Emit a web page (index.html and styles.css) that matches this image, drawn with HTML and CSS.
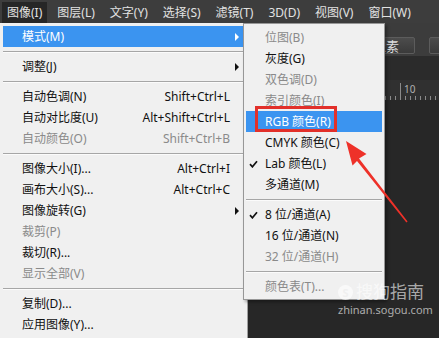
FILE: index.html
```html
<!DOCTYPE html>
<html lang="zh-CN">

<head>
    <meta charset="UTF-8">
    <meta name="viewport" content="width=device-width, initial-scale=1.0">
    <title>图像 - 模式</title>
    <link rel="stylesheet" href="styles.css">
</head>

<body>
    <div class="app">
        <nav class="menubar">
            <span class="menubar-item active">图像(I)</span>
            <span class="menubar-item">图层(L)</span>
            <span class="menubar-item">文字(Y)</span>
            <span class="menubar-item">选择(S)</span>
            <span class="menubar-item">滤镜(T)</span>
            <span class="menubar-item">3D(D)</span>
            <span class="menubar-item">视图(V)</span>
            <span class="menubar-item">窗口(W)</span>
        </nav>

        <div class="workspace">
            <div class="menu main-menu">
                <div class="item selected"><span class="label">模式(M)</span><span class="key"></span><span class="more"></span></div>
                <div class="sep"></div>
                <div class="item"><span class="label">调整(J)</span><span class="key"></span><span class="more"></span></div>
                <div class="sep"></div>
                <div class="item"><span class="label">自动色调(N)</span><span class="key">Shift+Ctrl+L</span><span></span></div>
                <div class="item"><span class="label">自动对比度(U)</span><span class="key">Alt+Shift+Ctrl+L</span><span></span></div>
                <div class="item disabled"><span class="label">自动颜色(O)</span><span class="key">Shift+Ctrl+B</span><span></span></div>
                <div class="sep"></div>
                <div class="item"><span class="label">图像大小(I)...</span><span class="key">Alt+Ctrl+I</span><span></span></div>
                <div class="item"><span class="label">画布大小(S)...</span><span class="key">Alt+Ctrl+C</span><span></span></div>
                <div class="item"><span class="label">图像旋转(G)</span><span class="key"></span><span class="more"></span></div>
                <div class="item disabled"><span class="label">裁剪(P)</span><span class="key"></span><span></span></div>
                <div class="item"><span class="label">裁切(R)...</span><span class="key"></span><span></span></div>
                <div class="item disabled"><span class="label">显示全部(V)</span><span class="key"></span><span></span></div>
                <div class="sep"></div>
                <div class="item"><span class="label">复制(D)...</span><span class="key"></span><span></span></div>
                <div class="item"><span class="label">应用图像(Y)...</span><span class="key"></span><span></span></div>
            </div>

            <div class="canvas-area">
                <div class="options-bar">
                    <span class="opt-btn">像素</span>
                    <span class="opt-btn small"></span>
                </div>
                <div class="tab-strip"></div>
                <div class="ruler"><span class="ruler-num">10</span></div>
                <div class="canvas"></div>
            </div>
        </div>

        <!-- submenu of 模式 -->
        <div class="menu sub-menu">
            <div class="sub-item disabled">位图(B)</div>
            <div class="sub-item">灰度(G)</div>
            <div class="sub-item disabled">双色调(D)</div>
            <div class="sub-item disabled">索引颜色(I)</div>
            <div class="sub-item selected">RGB 颜色(R)</div>
            <div class="sub-item">CMYK 颜色(C)</div>
            <div class="sub-item checked">
                <svg class="check" viewBox="0 0 9 8" width="9" height="8"><path d="M1 4.2 L3.4 6.8 L8 1.2" fill="none" stroke="#111" stroke-width="1.7"/></svg>
                Lab 颜色(L)
            </div>
            <div class="sub-item">多通道(M)</div>
            <div class="sep"></div>
            <div class="sub-item checked">
                <svg class="check" viewBox="0 0 9 8" width="9" height="8"><path d="M1 4.2 L3.4 6.8 L8 1.2" fill="none" stroke="#111" stroke-width="1.7"/></svg>
                8 位/通道(A)
            </div>
            <div class="sub-item">16 位/通道(N)</div>
            <div class="sub-item disabled">32 位/通道(H)</div>
            <div class="sep"></div>
            <div class="sub-item disabled">颜色表(T)...</div>
        </div>

        <div class="mark-box"></div>

        <svg class="mark-arrow" viewBox="0 0 439 338" width="439" height="338">
            <polygon points="346,141 366.5,154 359,158.5 407.6,221.6 406.4,222.4 357,161 352.5,165.5" fill="#ee3129"/>
        </svg>

        <div class="watermark">
            <div class="wm-top"><span class="wm-logo">S</span><span class="wm-name">搜狗指南</span></div>
            <div class="wm-url">zhinan.sogou.com</div>
        </div>
    </div>
</body>

</html>
```

FILE: styles.css
```css
body {
    margin: 0;
    background-color: #282828;
    font-family: "Noto Sans", "Noto Sans CJK SC", sans-serif;
    font-size: 12px;
    overflow: hidden;
}

.app {
    position: relative;
    width: 439px;
    height: 338px;
    overflow: hidden;
}

/* top menu bar */
.menubar {
    display: flex;
    height: 23px;
    padding: 2px 0 0 2px;
    box-sizing: border-box;
    background-color: #3d3d3d;
    white-space: nowrap;
}

.menubar-item {
    padding: 0 5px;
    margin-right: 5px;
    line-height: 21px;
    color: #e2e2e2;
}

.menubar-item.active {
    background-color: #262626;
}

.workspace {
    display: flex;
    height: 315px;
}

/* menus */
.menu {
    background-color: #f0f0f0;
    color: #111;
}

.main-menu {
    width: 244px;
    flex-shrink: 0;
    padding: 3px 0 0 3px;
    border-right: 1px solid #a0a0a0;
}

.item {
    display: grid;
    grid-template-columns: 1fr auto 13px;
    align-items: center;
    width: 240px;
    height: 21px;
    padding-left: 19px;
    box-sizing: border-box;
    line-height: 21px;
    white-space: nowrap;
}

.item.selected,
.sub-item.selected {
    background-color: #3b94f0;
    color: white;
}

.item.disabled,
.sub-item.disabled {
    color: #8a8a8a;
}

.item .more::before {
    content: "";
    display: block;
    margin-left: 5px;
    width: 0;
    height: 0;
    border-left: 4px solid #111;
    border-top: 4px solid transparent;
    border-bottom: 4px solid transparent;
}

.item.selected .more::before {
    border-left-color: white;
}

.sep {
    height: 9px;
    position: relative;
}

.sep::after {
    content: "";
    position: absolute;
    left: 0;
    right: 0;
    top: 4px;
    border-top: 1px solid #a6a6a6;
    border-bottom: 1px solid #fbfbfb;
}

.main-menu .sep {
    width: 240px;
}

.sub-menu {
    position: absolute;
    left: 243px;
    top: 23px;
    width: 142px;
    padding: 3px 2px 2px;
    box-sizing: border-box;
    border: 1px solid #979797;
    box-shadow: 2px 2px 3px rgba(0, 0, 0, 0.35);
}

.sub-item {
    position: relative;
    height: 21px;
    padding-left: 19px;
    line-height: 21px;
    white-space: nowrap;
}

.sub-item .check {
    position: absolute;
    left: 3px;
    top: 7px;
}

/* canvas behind the menus */
.canvas-area {
    flex: 1;
    display: flex;
    flex-direction: column;
}

.options-bar {
    display: flex;
    gap: 14px;
    height: 33px;
    padding: 14px 0 0 115px;
    box-sizing: border-box;
    background-color: #3c3c3c;
    white-space: nowrap;
}

.opt-btn {
    flex-shrink: 0;
    width: 52px;
    height: 17px;
    padding-right: 15px;
    box-sizing: border-box;
    text-align: right;
    line-height: 16px;
    font-size: 13px;
    color: #dedede;
    background: linear-gradient(#4c4c4c, #3a3a3a);
    border: 1px solid #5c5c5c;
    border-radius: 2px;
}

.opt-btn.small {
    width: 40px;
}

.tab-strip {
    height: 24px;
    background-color: #2b2b2b;
}

.ruler {
    position: relative;
    height: 20px;
    background-color: #303030;
    background-image: repeating-linear-gradient(to right, #8a8a8a 0 1px, transparent 1px 5px);
    background-size: 100% 4px;
    background-position: 2px bottom;
    background-repeat: no-repeat;
}

.ruler::before {
    content: "";
    position: absolute;
    left: 152px;
    top: 3px;
    bottom: 0;
    border-left: 1px solid #8a8a8a;
}

.ruler-num {
    position: absolute;
    left: 156px;
    top: 3px;
    font-size: 10px;
    line-height: 12px;
    color: #b0b0b0;
}

.canvas {
    flex: 1;
    background-color: #272727;
}

/* annotations */
.mark-box {
    position: absolute;
    left: 255px;
    top: 106px;
    width: 82px;
    height: 26px;
    box-sizing: border-box;
    border: 3px solid #e2302a;
}

.mark-arrow {
    position: absolute;
    left: 0;
    top: 0;
}

.watermark {
    position: absolute;
    left: 338px;
    top: 282px;
    color: rgba(255, 255, 255, 0.62);
}

.wm-top {
    display: flex;
    align-items: center;
    gap: 3px;
    height: 20px;
}

.wm-logo {
    width: 15px;
    height: 15px;
    border-radius: 50%;
    background-color: rgba(255, 255, 255, 0.62);
    color: #f0f0f0;
    font-size: 11px;
    font-weight: bold;
    line-height: 15px;
    text-align: center;
}

.wm-name {
    font-size: 17px;
    line-height: 20px;
}

.wm-url {
    font-size: 11px;
    line-height: 14px;
    margin-top: 1px;
}
```
